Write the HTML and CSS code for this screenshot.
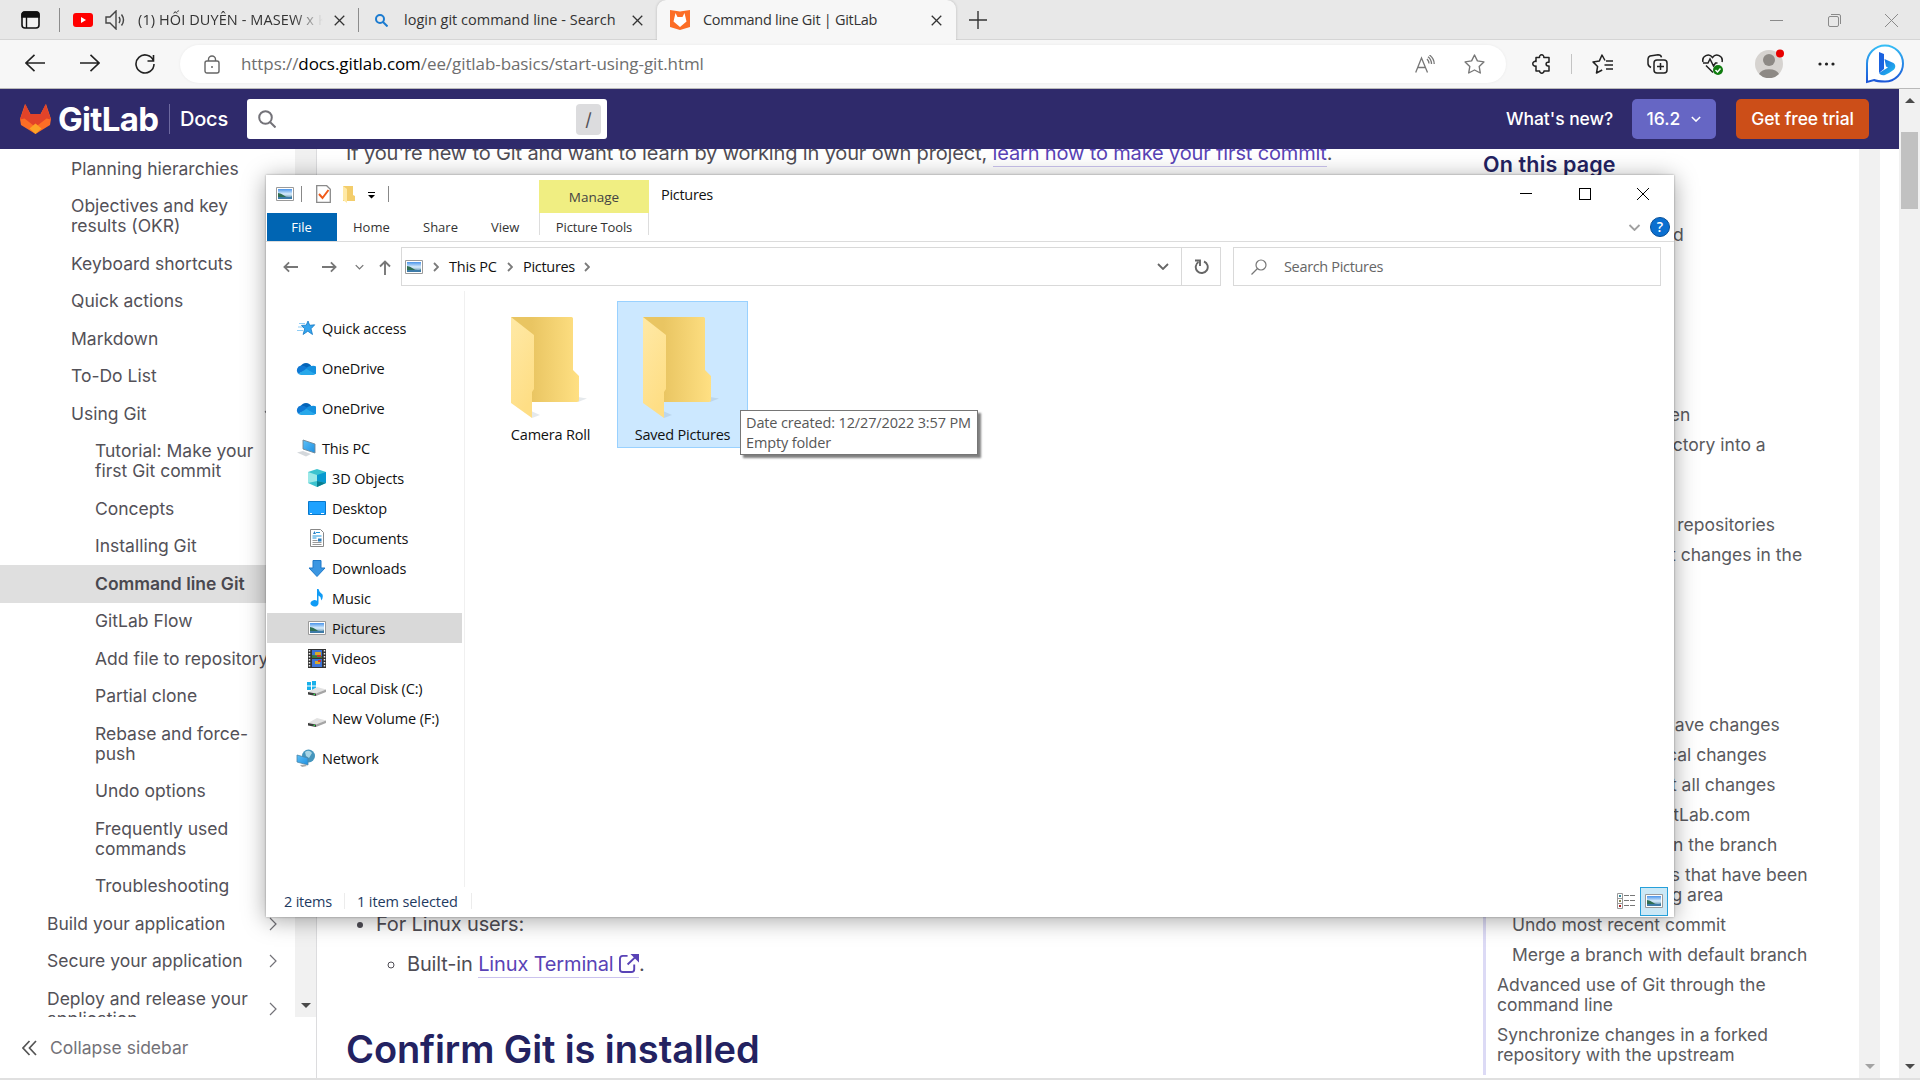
FILE: index.html
```html
<!DOCTYPE html>
<html lang="en">
<head>
<meta charset="utf-8">
<title>Command line Git | GitLab</title>
<link rel="stylesheet" href="styles.css">
</head>
<body>
<svg class="defs" width="0" height="0">
  <defs>
    <linearGradient id="folderBack" x1="0" x2="1"><stop offset=".3" stop-color="#e9c562"/><stop offset="1" stop-color="#ffe083"/></linearGradient>
    <linearGradient id="folderFlap" x1="0" x2=".4" y2="1"><stop offset="0" stop-color="#ffe9a6"/><stop offset="1" stop-color="#fede85"/></linearGradient>
    <linearGradient id="sky" x2="0" y2="1"><stop offset="0" stop-color="#4a94ea"/><stop offset=".5" stop-color="#d9edfb"/><stop offset="1" stop-color="#3f79a4"/></linearGradient>
    <linearGradient id="bing" x2="1" y2="1"><stop offset="0" stop-color="#1a60e0"/><stop offset="1" stop-color="#22c4f0"/></linearGradient>
    <linearGradient id="bingRing" x2="0" y2="1"><stop offset="0" stop-color="#35bdf5"/><stop offset="1" stop-color="#1b56d8"/></linearGradient>
    <linearGradient id="screen" x2="1" y2="1"><stop offset="0" stop-color="#5cc0f8"/><stop offset="1" stop-color="#1f8fe0"/></linearGradient>
  </defs>
  <symbol id="i-close" viewBox="0 0 12 12"><path d="M.8.8l10.400 10.400M11.200.8L.8 11.200" fill="none" stroke="currentColor" stroke-width="1.400"/></symbol>
  <symbol id="i-picture" viewBox="0 0 18 14"><path d="M.5.5h17v13H.5z" fill="#fff" stroke="#9a9a9a"/><path d="M2 2h14v10H2z" fill="url(#sky)"/><path d="M2 6q3 0 6 2.500t8 1V10H2z" fill="#2f6e52"/><path d="M2 10h14v2H2z" fill="#3d7ba8"/></symbol>
  <symbol id="i-folder" viewBox="0 0 78 104">
    <path d="M21 101l-1-7 9 4zM67 85V80l9 1.500z" fill="#7f8fa0" opacity=".2"/>
    <path d="M0 0h60.500q1.500 0 1.500 1.500V53l6 6v24q0 2-2 2H15z" fill="url(#folderBack)"/>
    <path d="M0 0l23 18v54l-2 3v26L0 86z" fill="url(#folderFlap)"/>
  </symbol>
  <symbol id="i-cloud" viewBox="0 0 20 13"><path d="M4.500 4.500A6 6 0 0 1 15.500 4.500L10 8z" fill="#0364b8"/><path d="M5 3.600a5 5 0 0 0-3 8.200L14 7 8 4Q6.500 3.300 5 3.600z" fill="#0f78d4"/><path d="M15.500 4a4.400 4.400 0 0 0-3.500.8l-4 3.500 11 4A4.400 4.400 0 0 0 15.500 4z" fill="#1490df"/><path d="M2 11.800L10.500 7l8.700 5A4 4 0 0 1 16 13H5a5 5 0 0 1-3-1.200z" fill="#28a8ea"/></symbol>
  <symbol id="i-drive" viewBox="0 0 18 9"><path d="M0 5L9 0l9 2.500-9 4z" fill="#e2e2e2"/><path d="M0 5l8 1.500V9L0 7.500z" fill="#3c3c3c"/><path d="M8 6.500l10-4V5L8 9z" fill="#a5a5a5"/><path d="M5.500 6.800h1.500v1.200H5.500z" fill="#2fe04a"/></symbol>
  <symbol id="i-right" viewBox="0 0 8 14"><path d="M1 1l6 6-6 6" fill="none" stroke="currentColor" stroke-width="1.200"/></symbol>
  <symbol id="i-crumb" viewBox="0 0 6 10"><path d="M1 1l4 4-4 4" fill="none" stroke="#7a7a7a" stroke-width="1.800"/></symbol>
  <symbol id="i-down" viewBox="0 0 12 7"><path d="M1 1l5 5 5-5" fill="none" stroke="currentColor" stroke-width="1.800"/></symbol>
  <symbol id="i-arrow" viewBox="0 0 20 18"><path d="M20 9H1M9.500 .8L1 9l8.500 8.200" fill="none" stroke="currentColor" stroke-width="1.600"/></symbol>
  <symbol id="i-arrow-s" viewBox="0 0 16 12"><path d="M16 6H1.500M6.500 1l-5 5 5 5" fill="none" stroke="#777" stroke-width="1.900"/></symbol>
  <symbol id="i-tri" viewBox="0 0 10 5"><path d="M0 0h10L5 5z" fill="currentColor"/></symbol>
</svg>

<header class="browser">
  <div class="tabstrip">
    <div class="tab-actions"><svg width="19" height="18" viewBox="0 0 19 18"><rect x="1" y="1" width="17" height="16" rx="3" fill="#f2f2f2" stroke="#111" stroke-width="1.600"/><path d="M1 6V3.500Q1 1 3.500 1h12Q18 1 18 3.500V6zM5.500 6v11" fill="#111" stroke="#111" stroke-width="1.400"/></svg></div>
    <div class="tab tab-one">
      <svg width="20" height="14" viewBox="0 0 20 14"><rect width="20" height="14" rx="3" fill="#f00"/><path d="M8 4l5 3-5 3z" fill="#fff"/></svg>
      <svg class="speaker" width="21" height="20" viewBox="0 0 21 20" fill="none" stroke="#444" stroke-width="1.400"><path d="M1 7h4l6-6v18l-6-6H1zM14 7q2 3 0 6M16.500 4.500q4 5.500 0 11"/></svg>
      <span class="tab-title fade">(1) HỐI DUYÊN - MASEW x K</span>
      <svg class="x" width="11" height="11"><use href="#i-close"/></svg>
    </div>
    <div class="tab tab-two">
      <svg width="13" height="13" viewBox="0 0 13 13" fill="none" stroke="#1b7bd0" stroke-width="2"><circle cx="5" cy="5" r="4"/><path d="M8 8l4.500 4.500"/></svg>
      <span class="tab-title">login git command line - Search</span>
      <svg class="x" width="11" height="11"><use href="#i-close"/></svg>
    </div>
    <div class="tab tab-active">
      <svg width="20" height="20" viewBox="0 0 20 20"><path d="M0 0l10 1.500L20 0v17l-10 3-10-3z" fill="#fc6d26"/><path d="M5.500 3l2 4h5l2-4 2 8.500L10 17 3.500 11.500z" fill="#fff"/></svg>
      <span class="tab-title">Command line Git | GitLab</span>
      <svg class="x" width="11" height="11"><use href="#i-close"/></svg>
    </div>
    <svg class="new-tab" width="18" height="18" viewBox="0 0 18 18"><path d="M9 0v18M0 9h18" stroke="#333" stroke-width="1.400"/></svg>
    <div class="win-controls">
      <svg width="13" height="13" viewBox="0 0 13 13"><path d="M0 6.500h13" stroke="#8a8a8a"/></svg>
      <svg width="13" height="13" viewBox="0 0 13 13" fill="none" stroke="#8a8a8a"><rect x=".5" y="2.500" width="10" height="10" rx="1.500"/><path d="M3 .5h8q1.500 0 1.500 1.500v8"/></svg>
      <svg width="13" height="13" viewBox="0 0 13 13"><path d="M0 0l13 13M13 0L0 13" stroke="#8a8a8a"/></svg>
    </div>
  </div>
  <div class="toolbar">
    <div class="nav-buttons">
      <svg width="20" height="18"><use href="#i-arrow"/></svg>
      <svg class="flip" width="20" height="18"><use href="#i-arrow"/></svg>
      <svg width="20" height="20" viewBox="0 0 20 20" fill="none" stroke="#222" stroke-width="1.600"><path d="M18.500 7A9 9 0 1 0 19 10M18.500 1v6h-6"/></svg>
    </div>
    <div class="address">
      <svg class="lock" width="16" height="19" viewBox="0 0 16 19" fill="none" stroke="#666" stroke-width="1.400"><rect x="1" y="6" width="14" height="12" rx="2"/><path d="M4.500 6V4.500a3.500 3.500 0 0 1 7 0V6"/><circle cx="8" cy="12" r="1" fill="#666" stroke="none"/></svg>
      <span class="url">https://<b>docs.gitlab.com</b>/ee/gitlab-basics/start-using-git.html</span>
      <svg class="read" width="20" height="18" viewBox="0 0 20 18" fill="none" stroke="#777" stroke-width="1.300"><path d="M.7 17.500L6.500 3l6 14.500M2.700 12.500h7.800M12 4q2 2 2 4.500M13 1.800Q16.500 4.500 16.500 9M14.500 0q4.700 3.500 4.700 9"/></svg>
      <svg width="21" height="20" viewBox="0 0 21 20" fill="none" stroke="#777" stroke-width="1.400" stroke-linejoin="round"><path d="M10.500 1l2.900 5.900 6.500 1-4.700 4.600 1.100 6.500-5.800-3-5.800 3 1.100-6.500L1.100 7.900l6.500-1z"/></svg>
    </div>
    <div class="tools">
      <svg class="t1" width="20" height="20" viewBox="0 0 20 20" fill="none" stroke="#222" stroke-width="1.500" stroke-linejoin="round"><path d="M4 3.500h3.500a2.200 2.200 0 1 1 4.300 0H17v4.700h-1a1.900 1.900 0 1 0 0 3.800h1v5h-5a2.200 2.200 0 1 1-4.400 0H4v-5a2.400 2.400 0 1 1 0-4.500z"/></svg>
      <i class="tool-sep"></i>
      <svg class="t2" width="21" height="20" viewBox="0 0 21 20" fill="none" stroke="#222" stroke-width="1.500" stroke-linejoin="round"><path d="M13 6.500L10 1 7.400 6.900 1 7.900l4.600 4.600L4.500 19l5.700-3M14 7h7M12.500 11H21M14 15h7"/></svg>
      <svg class="t3" width="21" height="20" viewBox="0 0 21 20" fill="none" stroke="#222" stroke-width="1.500"><rect x="7" y="6" width="13" height="13" rx="3"/><path d="M13.500 9v7M10 12.500h7M4 13.500Q1 12 1 9.500L1 5q0-2 2-3L11 .8q3 0 3.500 2.500"/></svg>
      <svg class="t4" width="21" height="21" viewBox="0 0 21 21" fill="none" stroke="#222" stroke-width="1.500"><path d="M1 8C-.5 2 7-1.500 10.500 3.500 14-1.500 21.500 2 20 8M1 9h5l2-4 3.500 7L13.500 9h2M4 11.500l7 7"/><circle cx="16" cy="16" r="5" fill="#107c10" stroke="none"/><path d="M13.500 16l2 2 3-3.500" stroke="#fff"/></svg>
      <svg class="t5" width="31" height="31" viewBox="0 0 31 31"><circle cx="14" cy="17" r="14" fill="#d6d3d0"/><circle cx="14" cy="13" r="6" fill="#8d8985"/><path d="M4 27a10.500 7 0 0 1 20 0A14 14 0 0 1 4 27z" fill="#8d8985"/><circle cx="25" cy="6.500" r="4" fill="#e80000"/></svg>
      <svg class="t6" width="17" height="4" viewBox="0 0 17 4" fill="#222"><circle cx="2" cy="2" r="1.600"/><circle cx="8.500" cy="2" r="1.600"/><circle cx="15" cy="2" r="1.600"/></svg>
      <svg class="t7" width="40" height="40" viewBox="0 0 40 40"><path d="M2 38V19.500A18 18 0 1 1 20 37.500Q12 37.500 9 36z" fill="#fff" stroke="url(#bingRing)" stroke-width="2"/><path d="M14 8l5 2v15l-5 4z" fill="#1b62e0"/><path d="M19.500 15l9 4q2.500 2 1.500 5-1 2.500-10 7-4 1-6-2l9-5.500-2-1z" fill="url(#bing)"/></svg>
    </div>
  </div>
</header>

<div class="viewport">
  <div class="site">
    <nav class="gl-nav">
      <svg width="31" height="30" viewBox="0 0 31 30"><path d="M0 15L5 0l5.500 10h10L26 0l5 15-1 6-14.500 9L1 21z" fill="#fc6d26"/><path d="M5.500 0l4.500 10h11L25.500 0 31 15.500l-4.500-1-11 8.500-11-8.500-4.500 1z" fill="#e24329"/><path d="M15.500 19.500l6 5-6 5.500-6-5.500z" fill="#fca326"/></svg>
      <span class="brand">GitLab</span>
      <span class="docs">Docs</span>
      <div class="gl-search">
        <svg width="18" height="18" viewBox="0 0 18 18" fill="none" stroke="#737278" stroke-width="2"><circle cx="7.500" cy="7.500" r="6.300"/><path d="M12 12l5.500 5.500"/></svg>
        <kbd>/</kbd>
      </div>
      <span class="whats-new">What's new?</span>
      <button class="btn version">16.2 <svg width="10" height="6"><use href="#i-down"/></svg></button>
      <button class="btn trial">Get free trial</button>
    </nav>
    <div class="columns">
      <aside class="sidebar">
        <div class="side-scroll">
          <ul class="side-list">
            <li class="l2">Planning hierarchies</li>
            <li class="l2">Objectives and key<br>results (OKR)</li>
            <li class="l2">Keyboard shortcuts</li>
            <li class="l2">Quick actions</li>
            <li class="l2">Markdown</li>
            <li class="l2">To-Do List</li>
            <li class="l2"><span>Using Git</span><svg class="open" width="14" height="8"><use href="#i-down"/></svg></li>
            <li class="l3">Tutorial: Make your<br>first Git commit</li>
            <li class="l3">Concepts</li>
            <li class="l3">Installing Git</li>
            <li class="l3 current">Command line Git</li>
            <li class="l3">GitLab Flow</li>
            <li class="l3">Add file to repository</li>
            <li class="l3">Partial clone</li>
            <li class="l3">Rebase and force-<br>push</li>
            <li class="l3">Undo options</li>
            <li class="l3">Frequently used<br>commands</li>
            <li class="l3">Troubleshooting</li>
            <li class="l1"><span>Build your application</span><svg width="8" height="14"><use href="#i-right"/></svg></li>
            <li class="l1"><span>Secure your application</span><svg width="8" height="14"><use href="#i-right"/></svg></li>
            <li class="l1"><span>Deploy and release your<br>application</span><svg width="8" height="14"><use href="#i-right"/></svg></li>
          </ul>
          <div class="scrollbar"><svg width="10" height="5"><use href="#i-tri"/></svg></div>
        </div>
        <div class="collapse"><svg width="15" height="16" viewBox="0 0 15 16" fill="none" stroke="#555" stroke-width="1.700"><path d="M7.500 1L1 8l6.500 7M14 1L7.500 8l6.500 7"/></svg>Collapse sidebar</div>
      </aside>
      <main class="article">
        <p class="intro">If you're new to Git and want to learn by working in your own project, <a>learn how to make your first commit</a>.</p>
        <ul class="terminals">
          <li>For Linux users:
            <ul><li>Built-in <a>Linux Terminal <svg width="20" height="19" viewBox="0 0 21 20" fill="none" stroke="#5943b6" stroke-width="2"><path d="M9 2H4Q1 2 1 5v11q0 3 3 3h9q3 0 3-3v-5M9 11L18 2.500"/><path d="M12 0h9v9z" fill="#5943b6" stroke="none"/></svg></a>.</li></ul>
          </li>
        </ul>
        <h2>Confirm Git is installed</h2>
      </main>
      <aside class="toc">
        <h3>On this page</h3>
        <ul>
          <li>Choose a terminal</li>
          <li>Confirm Git is installed</li>
          <li>Configure Git</li>
          <li>Choose a repository</li>
          <li>Clone a repository</li>
          <li class="sub">Clone with SSH</li>
          <li class="sub">Clone with HTTPS</li>
          <li class="deep">Clone using a token</li>
          <li class="sub">Convert a local directory into a<br>repository</li>
          <li>Add a remote</li>
          <li class="deep">View your remote repositories</li>
          <li class="sub">Download the latest changes in the<br>project</li>
          <li>Branches</li>
          <li class="sub">Create a branch</li>
          <li class="sub">Switch to a branch</li>
          <li class="sub">View differences</li>
          <li class="sub">View the files that have changes</li>
          <li class="sub">Add and commit local changes</li>
          <li class="deep">Stage and commit all changes</li>
          <li class="sub">Send changes to GitLab.com</li>
          <li class="sub">Delete all changes in the branch</li>
          <li class="sub">Unstage all changes that have been<br>added to the staging area</li>
          <li class="sub">Undo most recent commit</li>
          <li class="sub">Merge a branch with default branch</li>
          <li>Advanced use of Git through the<br>command line</li>
          <li>Synchronize changes in a forked<br>repository with the upstream</li>
        </ul>
      </aside>
      <div class="scrollbar toc-bar"><svg width="10" height="5"><use href="#i-tri"/></svg></div>
    </div>
  </div>
  <div class="scrollbar page-bar">
    <svg width="10" height="5" class="flip-v"><use href="#i-tri"/></svg>
    <i class="thumb"></i>
    <svg width="10" height="5" class="end"><use href="#i-tri"/></svg>
  </div>
</div>
<div class="bottom-edge"></div>

<section class="explorer">
  <div class="titlebar">
    <div class="quick">
      <svg width="18" height="14"><use href="#i-picture"/></svg>
      <i></i>
      <svg class="q-doc" width="15" height="18" viewBox="0 0 15 18"><path d="M.7.7h10l3.600 3.600v13H.7z" fill="#fff" stroke="#8a8a8a" stroke-width="1.300"/><path d="M3 9l3.500 4 6-8" fill="none" stroke="#f05a1a" stroke-width="2"/></svg>
      <svg class="q-folder" width="12" height="17" viewBox="0 0 12 17"><path d="M0 0h10v9l2 1v5H0z" fill="#f3cd6b"/><path d="M0 0l4 3v14l-4-3z" fill="#ffe9a6"/></svg>
      <svg class="q-drop" width="7" height="7" viewBox="0 0 7 7"><path d="M0 0h7v1H0zM0 3h7L3.500 6.500z" fill="#000"/></svg>
      <i></i>
    </div>
    <div class="manage">Manage</div>
    <div class="win-title">Pictures</div>
    <div class="ex-controls">
      <svg width="12" height="12" viewBox="0 0 12 12"><path d="M0 5.500h12" stroke="#000"/></svg>
      <svg width="12" height="12" viewBox="0 0 12 12"><rect x=".5" y=".5" width="11" height="11" fill="none" stroke="#000"/></svg>
      <svg width="12" height="12" viewBox="0 0 12 12"><path d="M0 0l12 12M12 0L0 12" stroke="#000"/></svg>
    </div>
  </div>
  <div class="ribbon">
    <span class="file">File</span><span class="r-home">Home</span><span class="r-share">Share</span><span class="r-view">View</span><span class="r-tools">Picture Tools</span>
    <svg class="r-chev" width="13" height="7"><use href="#i-down"/></svg>
    <span class="help">?</span>
  </div>
  <div class="nav-row">
    <svg class="n-back" width="15" height="12"><use href="#i-arrow-s"/></svg>
    <svg class="n-fwd flip" width="15" height="12"><use href="#i-arrow-s"/></svg>
    <svg class="n-chev" width="9" height="6"><use href="#i-down"/></svg>
    <svg class="n-up" width="12" height="15" viewBox="0 0 12 15"><path d="M6 15V1.500M1 6.500l5-5 5 5" fill="none" stroke="#777" stroke-width="1.900"/></svg>
    <div class="path">
      <svg width="18" height="14"><use href="#i-picture"/></svg>
      <svg class="c1" width="6" height="10"><use href="#i-crumb"/></svg>
      <span class="p1">This PC</span>
      <svg class="c2" width="6" height="10"><use href="#i-crumb"/></svg>
      <span class="p2">Pictures</span>
      <svg width="6" height="10"><use href="#i-crumb"/></svg>
      <svg class="p-chev" width="12" height="7"><use href="#i-down"/></svg>
      <div class="refresh"><svg width="15" height="16" viewBox="0 0 15 16" fill="none" stroke="#666" stroke-width="1.900"><path d="M10 2.500A6 6 0 1 1 4.500 3M1 1.500h5V7"/></svg></div>
    </div>
    <div class="ex-search">
      <svg width="16" height="16" viewBox="0 0 16 16" fill="none" stroke="#777" stroke-width="1.200"><circle cx="10" cy="6" r="5"/><path d="M6.500 9.500L.5 15.500"/></svg>
      <span>Search Pictures</span>
    </div>
  </div>
  <div class="ex-body">
    <ul class="tree">
      <li class="root"><svg width="20" height="18" viewBox="0 0 20 18"><path d="M3 4.500h6M2 8h6M1 11.500h6" stroke="#8fcdf5" stroke-width="1.200"/><path d="M12 2l1.700 4.300 5-.5-3.700 4 1.500 5.700-4.700-3.300-4.700 3.300 1.600-5.700-3.200-3.400 4.700-.2z" fill="#35a5ee" stroke="#1478c4" stroke-width=".8"/></svg>Quick access</li>
      <li class="root"><svg width="20" height="13"><use href="#i-cloud"/></svg>OneDrive</li>
      <li class="root"><svg width="20" height="13"><use href="#i-cloud"/></svg>OneDrive</li>
      <li class="root"><svg width="20" height="18" viewBox="0 0 20 18"><path d="M7 1l12 4v9L7 10z" fill="url(#screen)" stroke="#6f8796" stroke-width=".9"/><path d="M1 13.500l6-1.500 8 3-5 2.500z" fill="#d4d8dc"/></svg>This PC</li>
      <li><svg width="18" height="18" viewBox="0 0 18 18"><path d="M9 0l9 3v11l-9 4-9-4V3z" fill="#3cc3cf"/><path d="M0 3l9 3v6l-9 2z" fill="#9ce9e8"/><path d="M18 3L9 6v6l9 2z" fill="#0899d0"/><path d="M9 12l9 2-9 4z" fill="#087e90"/></svg>3D Objects</li>
      <li><svg width="18" height="14" viewBox="0 0 18 14"><path d="M.5.5h17v13H.5z" fill="#1ea2ff" stroke="#0878cc"/><path d="M2 12.500h2M13 12.500h3" stroke="#fff"/></svg>Desktop</li>
      <li><svg width="18" height="18" viewBox="0 0 18 18"><path d="M2.500.5h10l3 3v14h-13z" fill="#fff" stroke="#888"/><path d="M8 3.500h4M4.500 7h9M4.500 9h4" stroke="#2196dd"/><path d="M5 5l1.500-3L8 5M10 9.500h3.500v3H10z" fill="#2d7fc0"/><path d="M4.500 11.500h5M4.500 13.500h9M4.500 15.500h9" stroke="#999"/></svg>Documents</li>
      <li><svg width="18" height="17" viewBox="0 0 18 17"><path d="M5 .5h8V8h4l-8 8.500L1 8h4z" fill="#3a96e2" stroke="#1f79c8"/></svg>Downloads</li>
      <li><svg width="18" height="18" viewBox="0 0 18 18"><path d="M9 0h1.500q.5 3 4 5.500 1 4-1.500 6 .5-4-2.500-5v7.500A4 3.200 0 1 1 9 11.800z" fill="#0f9bf5"/></svg>Music</li>
      <li class="sel"><svg width="18" height="14"><use href="#i-picture"/></svg>Pictures</li>
      <li><svg width="18" height="19" viewBox="0 0 18 19"><path d="M0 0h18v19H0z" fill="#333"/><path d="M1.500 1v18M16.500 1v18" stroke="#eee" stroke-width="1.500" stroke-dasharray="1.500 1.500"/><path d="M4 1h10v8H4zM4 10h10v8H4z" fill="#3d74d8"/><path d="M7 6V3h6v4zM7 15v-3h5v3z" fill="#d6a92c"/><path d="M4 6l10 1v2H4z" fill="#3a7a3a"/><path d="M10 11h3v2h-3zM9 6h4v2H9z" fill="#c33"/></svg>Videos</li>
      <li><svg class="sysdrive" width="19" height="15" viewBox="0 0 19 15"><path d="M0 1h4v3.500H0zM5 0h4v4.500H5zM0 5.500h4V9H0zM5 5.500h4V9.500H5z" fill="#18b0ea"/><use href="#i-drive" x="1" y="6" width="18" height="9"/></svg>Local Disk (C:)</li>
      <li><svg class="low" width="18" height="9"><use href="#i-drive"/></svg>New Volume (F:)</li>
      <li class="root net"><svg width="20" height="18" viewBox="0 0 20 18"><circle cx="12.500" cy="7" r="6.500" fill="#4596bd"/><path d="M9 3q4-3 7 1l-3 5-3-2z" fill="#a8d5e5"/><path d="M1 6l11 3v7L1 13z" fill="url(#screen)" stroke="#4b87aa" stroke-width=".8"/><path d="M4 16l5-.5 2 1.500-5 1z" fill="#aaa"/></svg>Network</li>
    </ul>
    <div class="files">
      <div class="tile"><svg width="78" height="104"><use href="#i-folder"/></svg><span>Camera Roll</span></div>
      <div class="tile chosen"><svg width="78" height="104"><use href="#i-folder"/></svg><span>Saved Pictures</span></div>
    </div>
  </div>
  <div class="status">
    <span class="s1">2 items</span><i></i><span class="s2">1 item selected</span><i></i>
    <svg class="details" width="18" height="16" viewBox="0 0 18 16"><path d="M.5.500h5v15h-5zM.5 5.500h5M.5 10.500h5" fill="#fff" stroke="#999"/><path d="M7 2.500h5M13 2.500h5M7 7.500h5M13 7.500h5M7 12.500h5M13 12.500h5" stroke="#777"/><path d="M2 2h2v2H2z" fill="#389"/><path d="M2 7h2v2H2z" fill="#885"/><path d="M2 12h2v2H2z" fill="#a22"/></svg>
    <div class="large"><svg width="18" height="14"><use href="#i-picture"/></svg></div>
  </div>
  <div class="tooltip">Date created: 12/27/2022 3:57 PM<br>Empty folder</div>
</section>
</body>
</html>
```

FILE: styles.css
```css
* { box-sizing: border-box; }
body { margin: 0; width: 1920px; height: 1080px; overflow: hidden; display: flex; flex-direction: column; position: relative; background: #fff; font-family: "Open Sans", "Noto Sans", sans-serif; }
svg { display: block; flex: none; }
ul { margin: 0; padding: 0; list-style: none; }
.defs { position: absolute; }
.flip { transform: scaleX(-1); }
.flip-v { transform: scaleY(-1); }

/* browser chrome */
.browser { flex: none; height: 89px; border-bottom: 1px solid #b9b9b9; background: #f7f7f7; }
.tabstrip { height: 40px; display: flex; align-items: center; background: #e8e8e8; box-shadow: inset 0 -1px #d5d5d5; font-size: 14.5px; color: #333; }
.tab-actions { width: 60px; padding-left: 21px; height: 24px; display: flex; align-items: center; border-right: 1px solid #8c8c8c; }
.tab { display: flex; align-items: center; color: #333; }
.tab-title { white-space: nowrap; padding-bottom: 2px; }
.x { color: #333; margin-left: auto; }
.tab-one { width: 299px; height: 24px; padding: 0 13px; border-right: 1px solid #8c8c8c; letter-spacing: .1px; }
.speaker { margin: 0 12px; }
.fade { width: 185px; overflow: hidden; -webkit-mask-image: linear-gradient(90deg, #000 84%, transparent); mask-image: linear-gradient(90deg, #000 84%, transparent); }
.tab-two { width: 298px; padding: 0 14px 0 16px; gap: 16px; }
.tab-active { width: 299px; height: 40px; padding: 0 14px 0 13px; gap: 13px; letter-spacing: -.28px; background: #f7f7f7; border-radius: 9px 9px 0 0; box-shadow: 0 0 3px rgba(0,0,0,.2); clip-path: inset(0 -4px 0 -4px); }
.new-tab { margin-left: 13px; }
.win-controls { margin-left: auto; margin-right: 22px; display: flex; gap: 44.5px; }
.toolbar { height: 48px; display: flex; align-items: center; color: #222; }
.nav-buttons { width: 180px; display: flex; gap: 35px; padding-left: 25px; }
.address { width: 1326px; height: 38px; border-radius: 19px; background: #fff; display: flex; align-items: center; padding: 0 21px 0 24px; box-shadow: 0 0 3px rgba(0,0,0,.06); }
.url { margin-left: 21px; padding-bottom: 2px; font-size: 17px; letter-spacing: -.08px; color: #6e6e6e; white-space: nowrap; }
.url b { font-weight: 400; color: #000; }
.read { margin-left: auto; margin-right: 29px; }
.tools { display: flex; align-items: center; padding-left: 26px; }
.tool-sep { width: 1px; height: 20px; background: #c4c4c4; margin: 0 20px 0 19px; }
.t3, .t4 { margin-left: 34px; }
.t5 { margin-left: 32px; margin-bottom: 3px; }
.t6 { margin-left: 32px; }
.t7 { margin-left: 30px; }

/* docs page */
.viewport { flex: none; height: 989px; display: flex; font-family: Inter, sans-serif; color: #535158; }
.site { width: 1899px; height: 989px; display: flex; flex-direction: column; }
.gl-nav { flex: none; height: 60px; background: #2f2a6b; display: flex; align-items: center; padding: 0 30px 0 20px; color: #fff; }
.brand { width: 111px; margin-left: 7px; font-size: 33px; line-height: 40px; font-weight: 700; letter-spacing: -.7px; }
.docs { width: 78px; height: 30px; line-height: 30px; padding-left: 10px; border-left: 1px solid #6d69a0; font-size: 20px; font-weight: 500; letter-spacing: -.2px; }
.gl-search { width: 360px; height: 40px; border-radius: 3px; background: #fff; display: flex; align-items: center; justify-content: space-between; padding: 0 6px 0 11px; }
kbd { width: 25px; height: 31px; border-radius: 4px; background: #dcdcde; color: #535158; font: 18px/31px Inter, sans-serif; text-align: center; }
.whats-new { margin-left: auto; width: 126px; padding-bottom: 1px; font-size: 17.5px; font-weight: 500; letter-spacing: -.05px; white-space: nowrap; }
.btn { border: 0; border-radius: 5px; height: 40px; display: flex; align-items: center; justify-content: center; gap: 11px; color: #fff; font: 500 17.5px Inter, sans-serif; padding: 0 0 1px; white-space: nowrap; }
.version { width: 84px; background: #6666c4; margin-right: 20px; }
.trial { width: 133px; background: #cc4e18; letter-spacing: -.1px; }
.columns { display: flex; height: 929px; overflow: hidden; }
.sidebar { flex: none; width: 317px; height: 929px; border-right: 1px solid #dcdcde; }
.side-scroll { height: 868px; display: flex; overflow: hidden; }
.side-list { width: 295px; padding-top: 1.2px; font-size: 17.5px; line-height: 20px; }
.side-list li { display: flex; justify-content: space-between; align-items: center; padding: 8.75px 18px 8.75px 0; white-space: nowrap; color: #535158; }
.side-list svg { color: #737278; }
.side-list .open { margin-right: -1px; }
.side-list .l1 { padding-left: 47px; }
.side-list .l2 { padding-left: 71px; }
.side-list .l3 { padding-left: 95px; }
.side-list .current { background: #dfdfdf; font-weight: 600; color: #4a484f; }
.scrollbar { flex: none; width: 21px; background: #f1f1f1; display: flex; flex-direction: column; align-items: center; justify-content: flex-end; padding-bottom: 9px; color: #4a4a4a; }
.collapse { height: 61px; display: flex; align-items: center; gap: 13px; padding-left: 22px; font-size: 17.5px; color: #737278; }
.article { width: 1166px; height: 929px; padding-left: 29px; font-size: 20px; line-height: 30px; letter-spacing: -.15px; color: #4f4d55; }
.article a { color: #5943b6; border-bottom: 1px solid #cbc3ee; padding-bottom: 1px; }
.article a svg { display: inline-block; vertical-align: -2px; }
.intro { margin: -11px 0 0; height: 30px; white-space: nowrap; }
.terminals { margin-top: 741px; padding-left: 30px; list-style: disc; }
.terminals ul { margin-top: 10px; padding-left: 31px; list-style: circle; }
h2 { margin: 45px 0 0; font-size: 38px; line-height: 50px; font-weight: 600; letter-spacing: -.1px; color: #232261; }
.toc { width: 376px; }
.toc h3 { margin: 0; height: 41px; padding-top: 1px; font-size: 21.5px; line-height: 28px; font-weight: 600; letter-spacing: .15px; color: #232261; }
.toc ul { border-left: 3px solid #dcdaf5; padding: 0 0 5px 11px; font-size: 17.5px; line-height: 20px; white-space: nowrap; color: #5a5a5e; }
.toc li { padding: 5px 0; }
.toc .sub { padding-left: 15px; }
.toc .deep { padding-left: 30px; }
.toc-bar { color: #a3a3a3; height: 929px; }
.page-bar { justify-content: flex-start; padding: 9px 0; }
.thumb { width: 17px; height: 77px; background: #c1c1c1; margin-top: 29px; }
.end { margin-top: auto; }
.bottom-edge { height: 2px; background: #e0e0e0; }

/* file explorer window */
.explorer { position: absolute; left: 266px; top: 175px; width: 1408px; height: 742px; background: #fff; display: flex; flex-direction: column; box-shadow: 0 3px 22px rgba(0,0,0,.36), 0 0 2px rgba(0,0,0,.35); font-size: 14.5px; letter-spacing: -.2px; color: #111; white-space: nowrap; }
.titlebar { flex: none; height: 38px; display: flex; align-items: center; }
.quick { width: 273px; display: flex; align-items: center; padding-left: 10px; }
.quick i { width: 1px; height: 16px; background: #888; margin-left: 7px; }
.q-doc { margin-left: 14px; }
.q-folder { margin-left: 12px; }
.q-drop { margin: 3px 6px 0 13px; }
.manage { width: 110px; height: 33px; margin-top: 5px; line-height: 35px; text-align: center; background: #f0ee82; font-size: 13.5px; letter-spacing: 0; color: #444; }
.win-title { margin-left: 12px; letter-spacing: -.3px; }
.ex-controls { margin-left: auto; margin-right: 25px; display: flex; gap: 46.5px; }
.ribbon { flex: none; height: 29px; border-bottom: 1px solid #dcdcdc; display: flex; align-items: center; font-size: 13px; letter-spacing: 0; color: #333; }
.file { width: 70px; height: 28px; line-height: 28px; margin-left: 1px; background: #0065b3; color: #fff; text-align: center; padding-right: 1px; }
.r-home { width: 70px; padding-left: 16px; }
.r-share { width: 68px; padding-left: 16px; }
.r-view { width: 64px; padding-left: 16px; }
.r-tools { width: 110px; height: 22px; margin-bottom: 6px; line-height: 28px; text-align: center; letter-spacing: -.15px; border-left: 1px solid #ddd; border-right: 1px solid #ddd; }
.r-chev { margin-left: auto; color: #a0a0a0; }
.help { width: 20px; height: 20px; border-radius: 50%; margin: 0 4px 0 9px; background: #0a6fd0; border: 1px solid #084f98; color: #fff; font-size: 14px; font-weight: 600; line-height: 18px; text-align: center; }
.nav-row { flex: none; height: 49px; display: flex; align-items: center; color: #777; }
.n-back { margin-left: 17px; }
.n-fwd { margin-left: 24px; }
.n-chev { margin-left: 18px; }
.n-up { margin: 2px 11px 0 15px; }
.path { width: 820px; height: 39px; border: 1px solid #d9d9d9; margin-left: -1px; display: flex; align-items: center; color: #111; padding-left: 3px; }
.c1 { margin: 0 10px 0 10px; }
.p1 { width: 58px; }
.c2 { margin-right: 10px; }
.p2 { width: 61px; letter-spacing: -.3px; }
.p-chev { margin-left: auto; color: #666; }
.refresh { width: 39px; height: 37px; margin-left: 12px; border-left: 1px solid #d9d9d9; display: flex; align-items: center; justify-content: center; }
.ex-search { width: 428px; height: 39px; margin-left: 12px; border: 1px solid #d9d9d9; display: flex; align-items: center; gap: 17px; padding-left: 17px; letter-spacing: -.33px; color: #666; }
.ex-body { height: 596px; display: flex; }
.tree { width: 199px; height: 596px; padding-top: 17px; border-right: 1px solid #f0f0f0; }
.tree li { display: flex; align-items: center; gap: 6px; height: 30px; margin: 0 2px 0 1px; padding-left: 41px; letter-spacing: -.15px; }
.tree .root { height: 40px; gap: 6px; padding-left: 29px; }
.tree .root:nth-child(4) { height: 30px; margin-top: 5px; }
.tree .net { margin-top: 5px; }
.tree .sel { background: #d9d9d9; }
.low { margin-top: 8px; }
.sysdrive { margin-left: -1px; }
.files { display: flex; padding: 10px 0 0 20px; gap: 1px; }
.tile { width: 131px; height: 147px; border: 1px solid transparent; display: flex; flex-direction: column; align-items: center; justify-content: space-between; padding: 15px 0 3px; }
.tile svg { margin-left: -2px; }
.chosen { background: #cce8ff; border-color: #99d1ff; }
.status { height: 30px; display: flex; align-items: center; padding: 0 6px 2px 18px; color: #1e3a5f; }
.status i { width: 1px; height: 16px; background: #ececec; }
.s1 { width: 60px; }
.s2 { width: 126px; padding-left: 12px; letter-spacing: -.1px; }
.details { margin-left: auto; margin-right: 5px; }
.large { width: 28px; height: 29px; border: 1px solid #26a0da; background: #cbe8f6; display: flex; align-items: center; justify-content: center; }
.tooltip { position: absolute; left: 474px; top: 235px; width: 238px; height: 45px; border: 1px solid #767676; background: #fff; padding: 2px 5px; line-height: 20px; letter-spacing: -.14px; color: #575757; box-shadow: 3px 3px 2px rgba(0,0,0,.5); }
```
